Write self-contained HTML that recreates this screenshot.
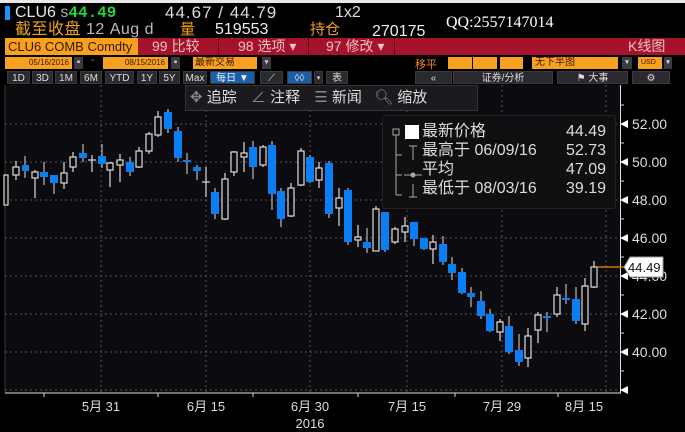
<!DOCTYPE html><html><head><meta charset="utf-8"><style>
*{margin:0;padding:0;box-sizing:border-box}
body{width:685px;height:432px;background:#000;overflow:hidden;position:relative;font-family:"Liberation Sans","Noto Sans CJK SC",sans-serif;}
.a{position:absolute;white-space:nowrap}
.o{background:#f8a020;color:#3a1800}
.g{background:#3a3a40;color:#ccc;font-size:10px;text-align:center;line-height:13px;font-weight:bold}
.btn{position:absolute;background:#2a2a2e;color:#ddd;font-size:10px;text-align:center;line-height:13px;border:1px solid #3a3a3e}
</style></head><body>
<div class="a" style="left:0;top:0;width:685px;height:3px;background:#e8e8e8"></div>
<div class="a" style="left:5px;top:6px;width:5px;height:14px;background:#1e90ff"></div>
<div class="a" style="left:15px;top:4px;font-size:16px;color:#e8e8e8;line-height:18px">CLU6 <span style="color:#aaa">s</span><span style="color:#26d43c;font-family:'Liberation Mono',monospace;font-weight:bold">44.49</span></div>
<div class="a" style="left:165px;top:4px;font-size:17px;letter-spacing:1px;color:#ddd;line-height:18px">44.67 / 44.79</div>
<div class="a" style="left:335px;top:4px;font-size:16px;color:#ddd;line-height:18px">1x2</div>
<div class="a" style="left:15px;top:21px;font-size:16px;color:#f0a020;line-height:18px;letter-spacing:0.5px">截至收盘 <span style="color:#bbb">12 Aug d</span></div>
<div class="a" style="left:180px;top:21px;font-size:15px;color:#f0a020;line-height:18px">量</div>
<div class="a" style="left:215px;top:21px;font-size:16px;color:#eee;line-height:18px">519553</div>
<div class="a" style="left:310px;top:21px;font-size:15px;color:#f0a020;line-height:18px">持仓</div>
<div class="a" style="left:372px;top:23px;font-size:16px;color:#eee;line-height:18px">270175</div>
<div class="a" style="left:446px;top:13px;font-size:16px;color:#fff;font-family:'Liberation Serif',serif;line-height:20px">QQ:2557147014</div>
<div class="a o" style="left:5px;top:38px;width:133px;height:17px;font-size:13px;line-height:17px;padding-left:3px;overflow:hidden">CLU6 COMB Comdty</div>
<div class="a" style="left:138px;top:38px;width:547px;height:17px;background:#a4132a"></div>
<div class="a" style="left:218px;top:38px;width:1px;height:17px;background:#5a0a14"></div>
<div class="a" style="left:308px;top:38px;width:1px;height:17px;background:#5a0a14"></div>
<div class="a" style="left:394px;top:38px;width:1px;height:17px;background:#5a0a14"></div>
<div class="a" style="left:152px;top:38px;font-size:14px;color:#f0c0c8;line-height:17px">99 比较</div>
<div class="a" style="left:238px;top:38px;font-size:14px;color:#f0c0c8;line-height:17px">98 选项 ▾</div>
<div class="a" style="left:326px;top:38px;font-size:14px;color:#f0c0c8;line-height:17px">97 修改 ▾</div>
<div class="a" style="left:628px;top:38px;font-size:14px;color:#f0c0c8;line-height:17px">K线图</div>
<div class="a o" style="left:5px;top:57px;width:67px;height:12px;font-size:8px;line-height:12px;text-align:right;padding-right:3px">05/16/2016</div>
<div class="a g" style="left:74px;top:57px;width:9px;height:12px;line-height:12px">▪</div>
<div class="a" style="left:91px;top:55px;color:#f8a020;font-size:10px">-</div>
<div class="a o" style="left:103px;top:57px;width:65px;height:12px;font-size:8px;line-height:12px;text-align:right;padding-right:3px">08/15/2016</div>
<div class="a g" style="left:171px;top:57px;width:9px;height:12px;line-height:12px">▪</div>
<div class="a o" style="left:193px;top:57px;width:64px;height:12px;font-size:10px;line-height:12px;padding-left:2px">最新交易</div>
<div class="a g" style="left:262px;top:57px;width:9px;height:12px;line-height:12px;font-size:7px">▾</div>
<div class="a" style="left:415px;top:56px;font-size:11px;color:#f08020">移平</div>
<div class="a o" style="left:448px;top:57px;width:24px;height:12px"></div>
<div class="a o" style="left:473px;top:57px;width:24px;height:12px"></div>
<div class="a o" style="left:500px;top:57px;width:23px;height:12px"></div>
<div class="a o" style="left:532px;top:57px;width:86px;height:12px;font-size:10px;line-height:12px;padding-left:3px">无下半图</div>
<div class="a g" style="left:622px;top:57px;width:10px;height:12px;line-height:12px;font-size:7px">▾</div>
<div class="a o" style="left:638px;top:57px;width:24px;height:12px;font-size:7px;line-height:12px;padding-left:3px">USD</div>
<div class="a g" style="left:664px;top:57px;width:8px;height:12px;line-height:12px;font-size:7px">▾</div>
<div class="btn" style="left:7px;top:71px;width:23px;height:13px">1D</div>
<div class="btn" style="left:32px;top:71px;width:21px;height:13px">3D</div>
<div class="btn" style="left:55px;top:71px;width:22px;height:13px">1M</div>
<div class="btn" style="left:80px;top:71px;width:22px;height:13px">6M</div>
<div class="btn" style="left:105px;top:71px;width:29px;height:13px">YTD</div>
<div class="btn" style="left:137px;top:71px;width:20px;height:13px">1Y</div>
<div class="btn" style="left:159px;top:71px;width:21px;height:13px">5Y</div>
<div class="btn" style="left:183px;top:71px;width:24px;height:13px">Max</div>
<div class="btn" style="left:210px;top:71px;width:45px;height:13px;background:#1a5fa8;color:#eef">每日 ▼</div>
<div class="btn" style="left:260px;top:71px;width:23px;height:13px">⟋</div>
<div class="btn" style="left:287px;top:71px;width:25px;height:13px;background:#1a5fa8">◊◊</div>
<div class="btn" style="left:314px;top:71px;width:9px;height:13px;font-size:7px">▾</div>
<div class="btn" style="left:326px;top:71px;width:22px;height:13px">表</div>
<div class="btn" style="left:415px;top:71px;width:37px;height:13px">«</div>
<div class="btn" style="left:453px;top:71px;width:100px;height:13px">证券/分析</div>
<div class="btn" style="left:557px;top:71px;width:71px;height:13px">⚑ 大事</div>
<div class="btn" style="left:632px;top:71px;width:38px;height:13px">⚙</div>
<svg class="a" style="left:0;top:85px" width="685" height="347" viewBox="0 85 685 347">
<rect x="5" y="85" width="615" height="308" fill="#0c0c10"/>
<line x1="5" y1="85" x2="5" y2="393" stroke="#333" stroke-width="1"/>
<g stroke="#555" stroke-dasharray="2,3" stroke-width="1">
<line x1="5" y1="124" x2="620" y2="124"/><line x1="5" y1="162" x2="620" y2="162"/><line x1="5" y1="200" x2="620" y2="200"/><line x1="5" y1="238" x2="620" y2="238"/><line x1="5" y1="276" x2="620" y2="276"/><line x1="5" y1="314" x2="620" y2="314"/><line x1="5" y1="352" x2="620" y2="352"/><line x1="5" y1="390" x2="620" y2="390"/>
<line x1="101" y1="85" x2="101" y2="393"/><line x1="206" y1="85" x2="206" y2="393"/><line x1="310" y1="85" x2="310" y2="393"/><line x1="407" y1="85" x2="407" y2="393"/><line x1="502" y1="85" x2="502" y2="393"/><line x1="606" y1="85" x2="606" y2="393"/>
</g>
<line x1="5" y1="393" x2="621" y2="393" stroke="#ddd"/>
<line x1="620.5" y1="85" x2="620.5" y2="393" stroke="#ddd"/>
<g stroke="#ddd"><line x1="44" y1="393" x2="44" y2="397"/><line x1="158" y1="393" x2="158" y2="397"/><line x1="253" y1="393" x2="253" y2="397"/><line x1="358" y1="393" x2="358" y2="397"/><line x1="455" y1="393" x2="455" y2="397"/><line x1="558" y1="393" x2="558" y2="397"/>
<line x1="620" y1="105" x2="624" y2="105"/><line x1="620" y1="143" x2="624" y2="143"/><line x1="620" y1="181" x2="624" y2="181"/><line x1="620" y1="219" x2="624" y2="219"/><line x1="620" y1="257" x2="624" y2="257"/><line x1="620" y1="295" x2="624" y2="295"/><line x1="620" y1="333" x2="624" y2="333"/><line x1="620" y1="371" x2="624" y2="371"/></g>
<g fill="#fff"><path d="M620 124l8-4v8z"/><path d="M620 162l8-4v8z"/><path d="M620 200l8-4v8z"/><path d="M620 238l8-4v8z"/><path d="M620 276l8-4v8z"/><path d="M620 314l8-4v8z"/><path d="M620 352l8-4v8z"/><path d="M620 390l8-4v8z"/></g>
<g fill="#ddd" font-size="14" font-family="Liberation Sans,sans-serif">
<text x="632" y="129">52.00</text><text x="632" y="167">50.00</text><text x="632" y="205">48.00</text><text x="632" y="243">46.00</text><text x="632" y="281">44.00</text><text x="632" y="319">42.00</text><text x="632" y="357">40.00</text>
</g>
<g fill="#ddd" font-size="13" font-family="Liberation Sans,Noto Sans CJK SC,sans-serif" text-anchor="middle">
<text x="101" y="411">5月 31</text><text x="206" y="411">6月 15</text><text x="310" y="411">6月 30</text><text x="407" y="411">7月 15</text><text x="502" y="411">7月 29</text><text x="584" y="411">8月 15</text><text x="310" y="428">2016</text>
</g>
<g stroke-width="1.2">
<g stroke="#ddd" fill="#0c0c10">
<rect x="4" y="175" width="4" height="30"/>
<line x1="16" y1="161" x2="16" y2="180"/><rect x="13" y="167" width="6" height="8"/>
<line x1="35" y1="170" x2="35" y2="198"/><rect x="32" y="172" width="6" height="6"/>
<line x1="64" y1="162" x2="64" y2="189"/><rect x="61" y="173" width="6" height="10"/>
<line x1="73" y1="152" x2="73" y2="172"/><rect x="70" y="157" width="6" height="10"/>
<line x1="92" y1="155" x2="92" y2="172"/><line x1="88" y1="160" x2="96" y2="160"/>
<line x1="110" y1="162" x2="110" y2="187"/><rect x="107" y="163" width="6" height="7"/>
<line x1="120" y1="154" x2="120" y2="182"/><rect x="117" y="160" width="6" height="5"/>
<line x1="139" y1="147" x2="139" y2="168"/><rect x="136" y="151" width="6" height="16"/>
<line x1="149" y1="132" x2="149" y2="154"/><rect x="146" y="134" width="6" height="17"/>
<line x1="158" y1="111" x2="158" y2="137"/><rect x="155" y="117" width="6" height="18"/>
<line x1="206" y1="167" x2="206" y2="197"/><line x1="202" y1="182" x2="210" y2="182"/>
<line x1="225" y1="173" x2="225" y2="220"/><rect x="222" y="179" width="6" height="40"/>
<line x1="234" y1="151" x2="234" y2="176"/><rect x="231" y="152" width="6" height="20"/>
<line x1="244" y1="142" x2="244" y2="172"/><rect x="241" y="153" width="6" height="4"/>
<line x1="263" y1="145" x2="263" y2="167"/><rect x="260" y="147" width="6" height="18"/>
<line x1="291" y1="183" x2="291" y2="217"/><rect x="288" y="188" width="6" height="28"/>
<line x1="301" y1="148" x2="301" y2="186"/><rect x="298" y="151" width="6" height="34"/>
<line x1="319" y1="162" x2="319" y2="188"/><rect x="316" y="168" width="6" height="12"/>
<line x1="339" y1="188" x2="339" y2="226"/><rect x="336" y="198" width="6" height="10"/>
<line x1="358" y1="225" x2="358" y2="247"/><rect x="355" y="237" width="6" height="3"/>
<line x1="376" y1="206" x2="376" y2="251"/><rect x="373" y="209" width="6" height="42"/>
<line x1="395" y1="227" x2="395" y2="244"/><rect x="392" y="229" width="6" height="13"/>
<line x1="405" y1="217" x2="405" y2="242"/><rect x="402" y="226" width="6" height="6"/>
<line x1="433" y1="235" x2="433" y2="264"/><rect x="430" y="242" width="6" height="7"/>
<line x1="500" y1="319" x2="500" y2="341"/><rect x="497" y="322" width="6" height="10"/>
<line x1="528" y1="328" x2="528" y2="367"/><rect x="525" y="336" width="6" height="22"/>
<line x1="538" y1="312" x2="538" y2="343"/><rect x="535" y="315" width="6" height="15"/>
<line x1="557" y1="287" x2="557" y2="317"/><rect x="554" y="295" width="6" height="19"/>
<line x1="585" y1="278" x2="585" y2="331"/><rect x="582" y="286" width="6" height="38"/>
<line x1="594" y1="261" x2="594" y2="288"/><rect x="591" y="267" width="6" height="20"/>
</g>
<g stroke="#bbb" fill="#0a7ff5">
<line x1="25" y1="156" x2="25" y2="178"/><rect x="22" y="165" width="7" height="6" stroke="none"/>
<line x1="44" y1="162" x2="44" y2="185"/><rect x="40" y="172" width="8" height="5" stroke="none"/>
<line x1="54" y1="175" x2="54" y2="194"/><rect x="50" y="175" width="8" height="8" stroke="none"/>
<line x1="83" y1="144" x2="83" y2="162"/><rect x="79" y="153" width="8" height="5" stroke="none"/>
<line x1="102" y1="144" x2="102" y2="168"/><rect x="98" y="156" width="8" height="8" stroke="none"/>
<line x1="130" y1="157" x2="130" y2="176"/><rect x="126" y="162" width="8" height="10" stroke="none"/>
<line x1="168" y1="109" x2="168" y2="133"/><rect x="164" y="112" width="8" height="17" stroke="none"/>
<line x1="178" y1="127" x2="178" y2="162"/><rect x="174" y="131" width="8" height="27" stroke="none"/>
<line x1="187" y1="153" x2="187" y2="174"/><rect x="183" y="160" width="8" height="2" stroke="none"/>
<line x1="197" y1="165" x2="197" y2="180"/><rect x="193" y="167" width="8" height="4" stroke="none"/>
<line x1="215" y1="188" x2="215" y2="219"/><rect x="211" y="192" width="8" height="22" stroke="none"/>
<line x1="253" y1="141" x2="253" y2="179"/><rect x="249" y="147" width="8" height="20" stroke="none"/>
<line x1="272" y1="141" x2="272" y2="210"/><rect x="268" y="145" width="8" height="49" stroke="none"/>
<line x1="281" y1="188" x2="281" y2="227"/><rect x="277" y="191" width="8" height="28" stroke="none"/>
<line x1="310" y1="155" x2="310" y2="183"/><rect x="306" y="157" width="8" height="25" stroke="none"/>
<line x1="329" y1="161" x2="329" y2="218"/><rect x="325" y="163" width="8" height="51" stroke="none"/>
<line x1="348" y1="188" x2="348" y2="245"/><rect x="344" y="190" width="8" height="52" stroke="none"/>
<line x1="367" y1="228" x2="367" y2="253"/><rect x="363" y="242" width="8" height="6" stroke="none"/>
<line x1="385" y1="212" x2="385" y2="252"/><rect x="381" y="212" width="8" height="38" stroke="none"/>
<line x1="414" y1="222" x2="414" y2="246"/><rect x="410" y="222" width="8" height="17" stroke="none"/>
<line x1="424" y1="238" x2="424" y2="250"/><rect x="420" y="238" width="8" height="11" stroke="none"/>
<line x1="443" y1="236" x2="443" y2="265"/><rect x="439" y="244" width="8" height="18" stroke="none"/>
<line x1="452" y1="257" x2="452" y2="280"/><rect x="448" y="264" width="8" height="9" stroke="none"/>
<line x1="462" y1="268" x2="462" y2="294"/><rect x="458" y="272" width="8" height="21" stroke="none"/>
<line x1="471" y1="287" x2="471" y2="307"/><rect x="467" y="293" width="8" height="4" stroke="none"/>
<line x1="481" y1="291" x2="481" y2="319"/><rect x="477" y="301" width="8" height="15" stroke="none"/>
<line x1="490" y1="309" x2="490" y2="332"/><rect x="486" y="314" width="8" height="17" stroke="none"/>
<line x1="509" y1="316" x2="509" y2="354"/><rect x="505" y="326" width="8" height="26" stroke="none"/>
<line x1="519" y1="334" x2="519" y2="366"/><rect x="515" y="350" width="8" height="12" stroke="none"/>
<line x1="547" y1="312" x2="547" y2="332"/><rect x="543" y="316" width="8" height="2" stroke="none"/>
<line x1="566" y1="284" x2="566" y2="304"/><rect x="562" y="298" width="8" height="2" stroke="none"/>
<line x1="576" y1="287" x2="576" y2="324"/><rect x="572" y="299" width="8" height="22" stroke="none"/>
</g></g>
<line x1="597" y1="267" x2="626" y2="267" stroke="#f08c00" stroke-width="1.2"/>
<path d="M624 267l6-10h33v20h-33z" fill="#fff" stroke="#999"/>
<text x="628" y="272" font-size="13" fill="#111" font-family="Liberation Sans,sans-serif">44.49</text>
</svg>
<div class="a" style="left:185px;top:85px;width:293px;height:26px;background:#1b1b1f;border:1px solid #333"></div>
<div class="a" style="left:190px;top:87px;font-size:15px;color:#ddd;line-height:22px"><span style="color:#888">✥</span> 追踪 <span style="color:#888;margin-left:10px">∠</span> 注释 <span style="color:#888;margin-left:10px">☰</span> 新闻 <span style="color:#888;margin-left:8px">🔍︎</span> 缩放</div>
<div class="a" style="left:382px;top:115px;width:234px;height:94px;background:#0f0f12;border:1px solid #222;border-radius:3px"></div>
<svg class="a" style="left:384px;top:120px" width="40" height="85"><g stroke="#aaa" fill="none"><rect x="9" y="9" width="6" height="6"/><line x1="12" y1="15" x2="12" y2="75"/><line x1="12" y1="35" x2="18" y2="35"/><line x1="12" y1="55" x2="18" y2="55"/><line x1="12" y1="75" x2="18" y2="75"/><line x1="29" y1="26" x2="29" y2="40"/><line x1="25" y1="26" x2="33" y2="26"/><line x1="20" y1="55" x2="38" y2="55"/><circle cx="29" cy="55" r="2" fill="#aaa"/><line x1="29" y1="64" x2="29" y2="77"/><line x1="25" y1="77" x2="33" y2="77"/></g><rect x="21" y="5" width="14" height="14" fill="#fff"/></svg>
<div class="a" style="left:422px;top:122px;font-size:16px;color:#ddd;line-height:19px">最新价格<br>最高于 06/09/16<br>平均<br>最低于 08/03/16</div>
<div class="a" style="left:556px;top:122px;font-size:16px;color:#ddd;line-height:19px;text-align:right;width:50px">44.49<br>52.73<br>47.09<br>39.19</div>
</body></html>
